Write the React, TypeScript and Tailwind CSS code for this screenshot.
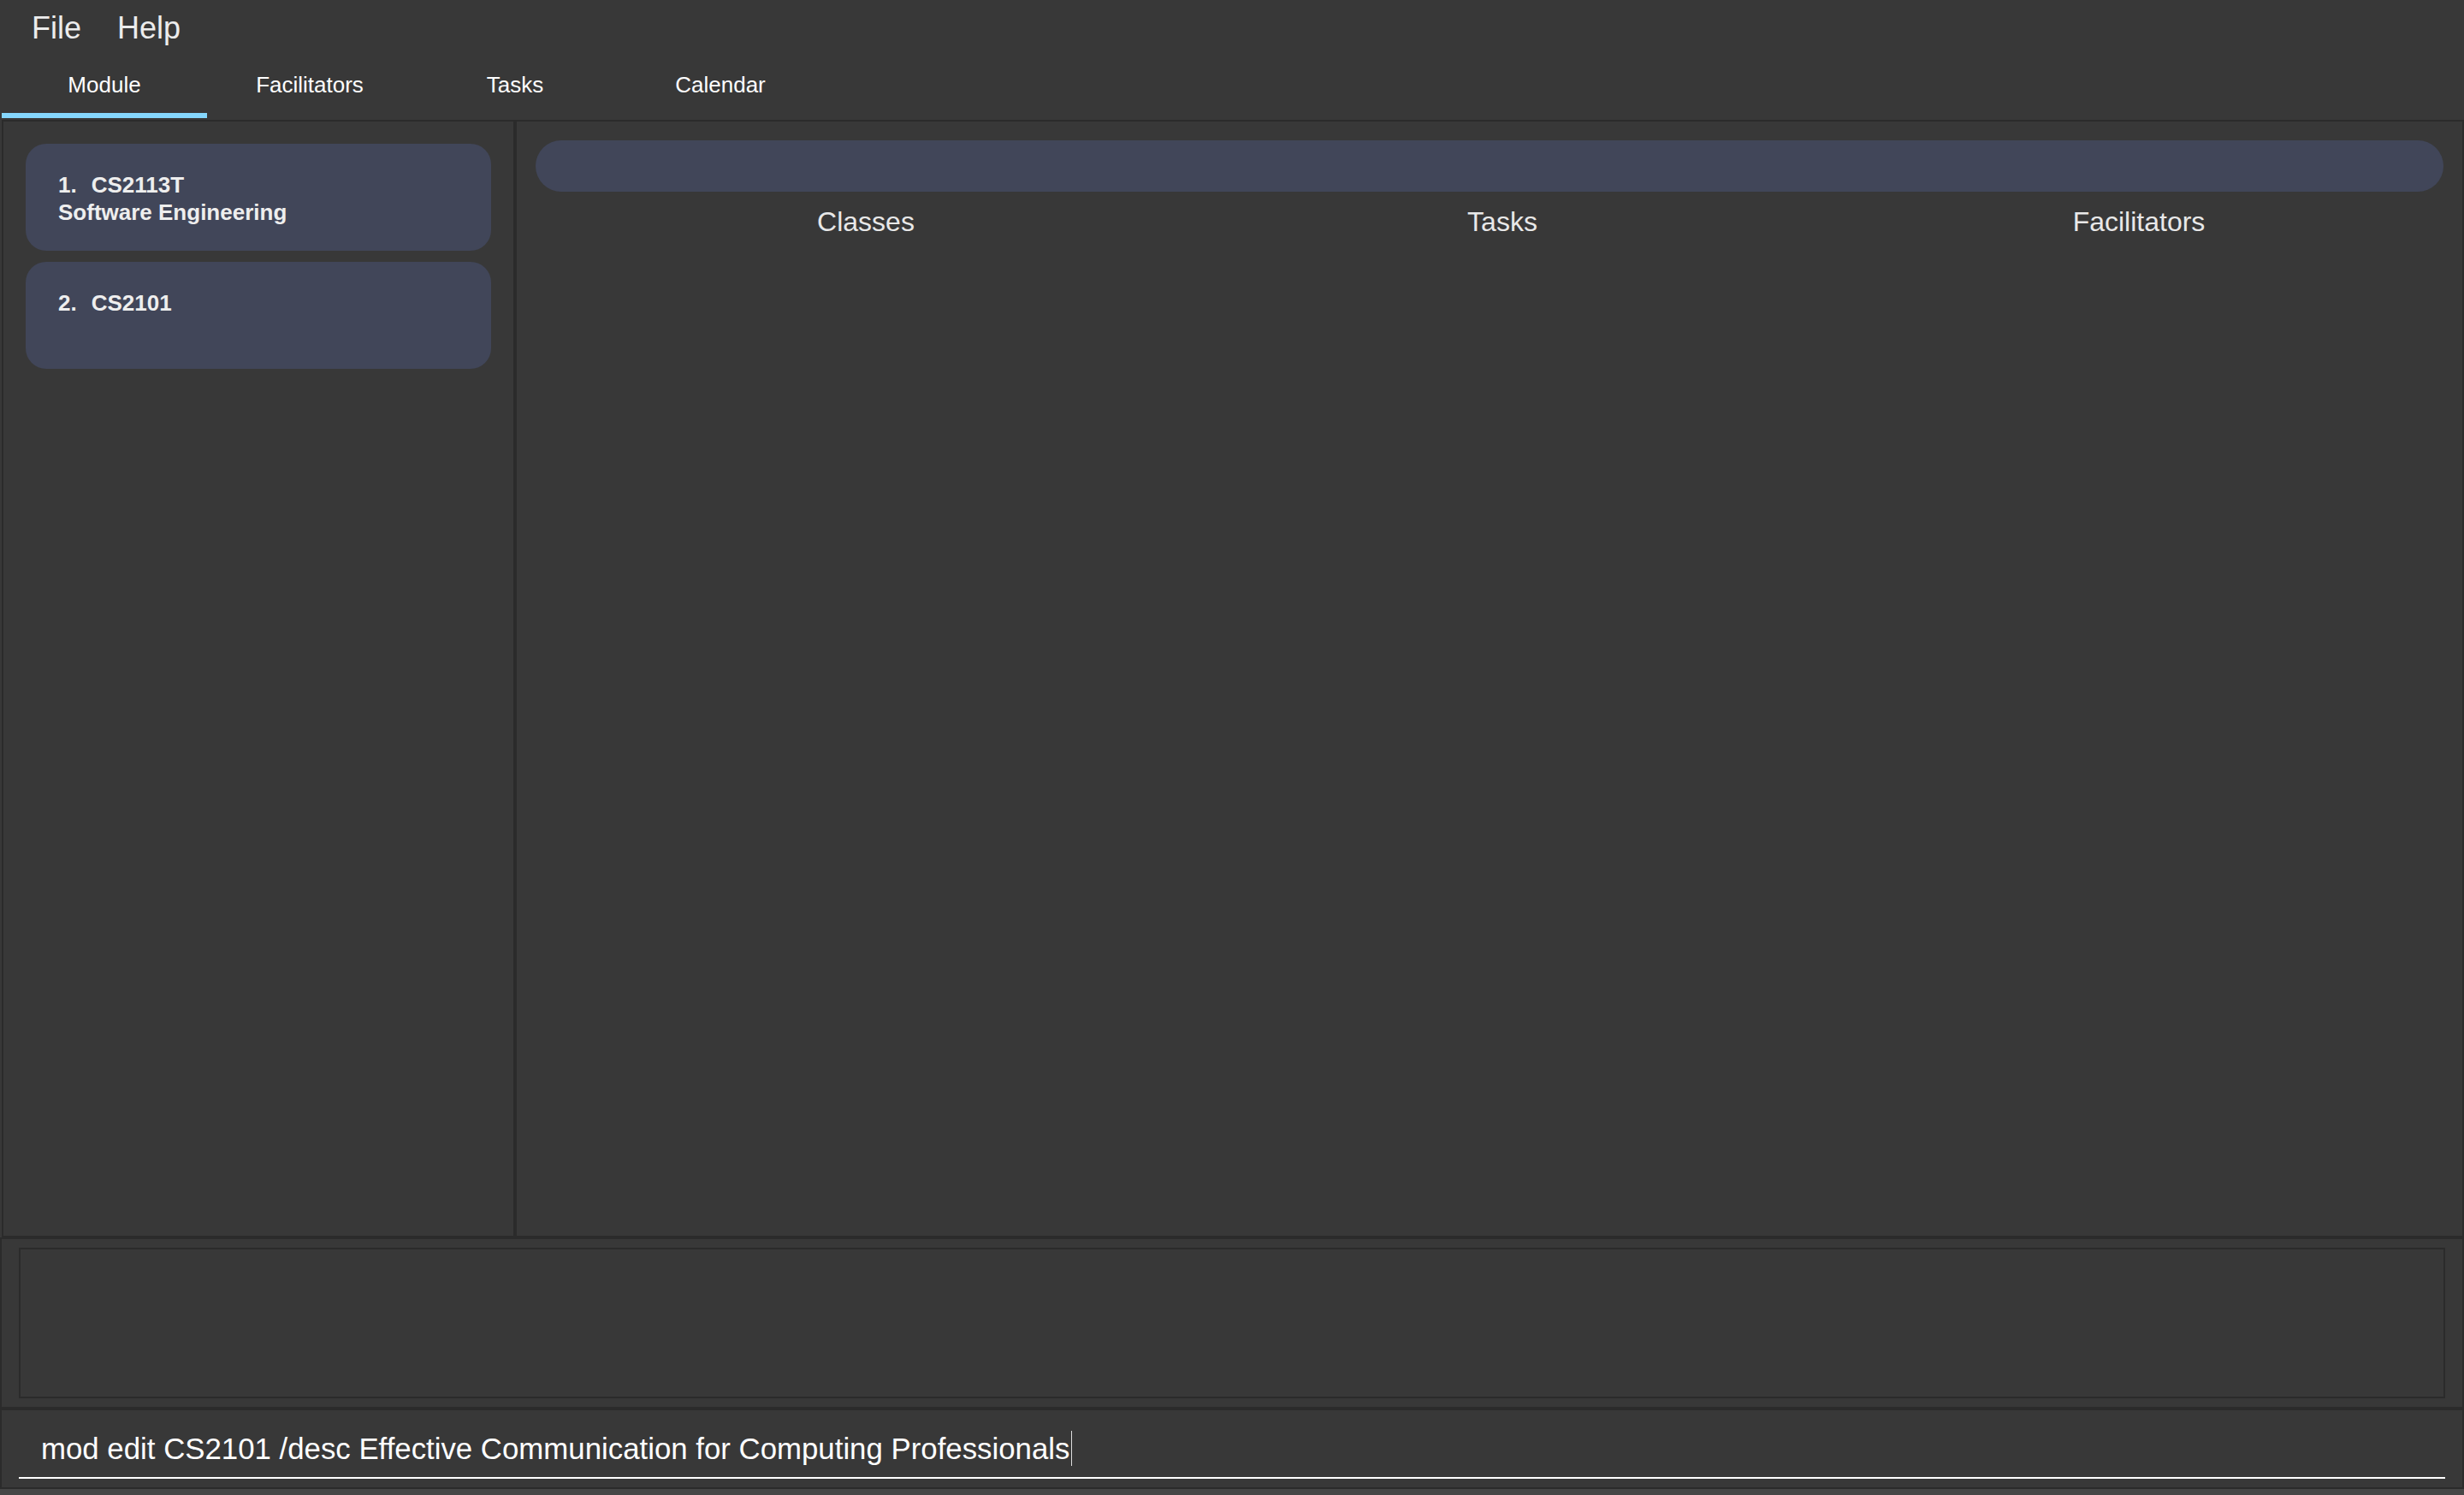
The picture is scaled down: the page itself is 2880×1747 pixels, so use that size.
import { useState } from "react";

const tabs = ["Module", "Facilitators", "Tasks", "Calendar"];

const modules = [
	{ code: "CS2113T", name: "Software Engineering" },
	{ code: "CS2101", name: "" },
];

const ModuleCard = ({ index, code, name }: { index: number; code: string; name: string }) => (
	<div className="h-[125px] rounded-[24px] bg-[#414659] pl-[38px] pt-[32px] text-[26px] font-bold leading-[32px] text-[#eeeeee]">
		<div>
			<span>{index}.</span>
			<span className="ml-[17px]">{code}</span>
		</div>
		<div>{name}</div>
	</div>
);

const App = () => {
	const [activeTab, setActiveTab] = useState("Module");

	return (
		<div className="flex h-screen w-full flex-col overflow-hidden bg-[#383838] font-['Liberation_Sans',Arial,sans-serif]">
			{/* menu bar */}
			<div className="flex h-[66px] shrink-0 items-center gap-[42px] pl-[37px] text-[36px] text-[#ececec]">
				<span>File</span>
				<span>Help</span>
			</div>

			{/* tabs */}
			<div className="ml-[2px] flex h-[72px] shrink-0">
				{tabs.map((tab) => (
					<button
						key={tab}
						onClick={() => setActiveTab(tab)}
						className="flex w-[240px] flex-col">
						<span className="flex h-[66px] items-center justify-center text-[26px] text-white">{tab}</span>
						<span className={`h-[6px] w-full ${activeTab === tab ? "bg-[#85d7fd]" : "bg-transparent"}`}></span>
					</button>
				))}
			</div>

			{/* main panels */}
			<div className="ml-[2px] mt-[2px] flex min-h-0 flex-1">
				<div className="flex w-[600px] flex-col gap-[13px] border-2 border-[#2b2b2b] px-[26px] pt-[26px]">
					{modules.map((m, i) => (
						<ModuleCard key={m.code} index={i + 1} code={m.code} name={m.name} />
					))}
				</div>
				<div className="flex flex-1 flex-col border-2 border-[#2b2b2b]">
					<div className="px-[22px] pt-[22px]">
						<div className="h-[60px] rounded-full bg-[#414659]"></div>
					</div>
					<div className="mt-[17px] grid grid-cols-3 pl-[36px] pr-[6px] text-[32px] leading-[36px] text-[#e8e8e8]">
						<div className="text-center">Classes</div>
						<div className="text-center">Tasks</div>
						<div className="text-center">Facilitators</div>
					</div>
				</div>
			</div>

			{/* result display */}
			<div className="h-[200px] shrink-0 border-2 border-[#2b2b2b] px-[20px] py-[10px]">
				<div className="h-full border-2 border-[#2b2b2b]"></div>
			</div>

			{/* command box */}
			<div className="h-[94px] shrink-0 overflow-hidden border-2 border-[#2b2b2b] px-[20px] pb-[10px] pt-[24px]">
				<div className="border-b-2 border-white pb-[13px] pl-[26px] text-[34.8px] leading-[40px] text-white">
					mod edit CS2101 /desc Effective Communication for Computing Professionals
					<span className="ml-[2px] inline-block h-[41px] w-px bg-[#dddddd] align-[-8px]"></span>
				</div>
			</div>

			<div className="h-[7px] shrink-0 bg-[#464646]"></div>
		</div>
	);
};

export default App;
